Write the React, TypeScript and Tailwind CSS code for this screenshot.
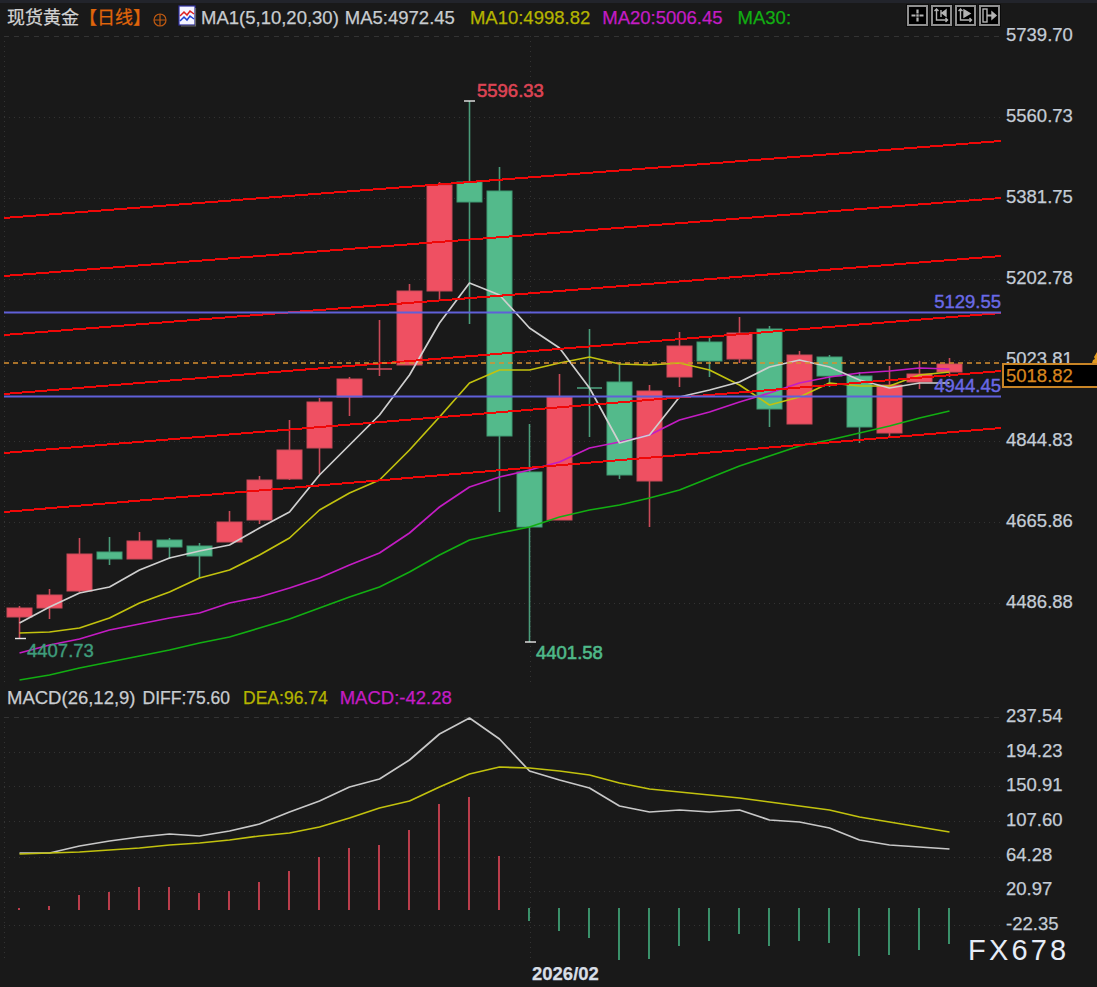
import React from 'react';

// y values are page pixels, one candle every 30px starting at x=19.5
const candles = [
  { t: 608, b: 617, h: 606, l: 639, up: true },
  { t: 595, b: 608, h: 589, l: 619, up: true },
  { t: 554, b: 591, h: 538, l: 592, up: true },
  { t: 552, b: 559, h: 537, l: 565, up: false },
  { t: 541, b: 559, h: 532, l: 559, up: true },
  { t: 540, b: 547, h: 538, l: 559, up: false },
  { t: 546, b: 556, h: 543, l: 578, up: false },
  { t: 522, b: 542, h: 511, l: 542, up: true },
  { t: 480, b: 520, h: 476, l: 524, up: true },
  { t: 450, b: 479, h: 420, l: 480, up: true },
  { t: 402, b: 448, h: 398, l: 474, up: true },
  { t: 379, b: 397, h: 377, l: 416, up: true },
  { t: 369, b: 369, h: 320, l: 376, up: true },
  { t: 291, b: 365, h: 284, l: 365, up: true },
  { t: 185, b: 291, h: 182, l: 300, up: true },
  { t: 182, b: 202, h: 101, l: 324, up: false },
  { t: 191, b: 436, h: 167, l: 512, up: false },
  { t: 472, b: 527, h: 424, l: 642, up: false },
  { t: 397, b: 520, h: 374, l: 520, up: true },
  { t: 388, b: 388, h: 329, l: 437, up: false },
  { t: 382, b: 475, h: 362, l: 479, up: false },
  { t: 391, b: 481, h: 385, l: 527, up: true },
  { t: 346, b: 377, h: 332, l: 387, up: true },
  { t: 342, b: 361, h: 337, l: 377, up: false },
  { t: 333, b: 359, h: 317, l: 363, up: true },
  { t: 329, b: 409, h: 326, l: 427, up: false },
  { t: 355, b: 424, h: 351, l: 424, up: true },
  { t: 357, b: 376, h: 355, l: 387, up: false },
  { t: 376, b: 427, h: 372, l: 443, up: false },
  { t: 385, b: 433, h: 366, l: 437, up: true },
  { t: 374, b: 382, h: 361, l: 389, up: true },
  { t: 364, b: 372, h: 358, l: 377, up: true },
];

const ma5 = [623, 607, 593, 587, 570, 558, 551, 545, 528, 512, 475, 445, 415, 375, 323, 283, 295, 328, 348, 388, 443, 435, 397, 390, 382, 367, 360, 367, 380, 388, 383, 383];
const ma10 = [633, 632, 628, 618, 603, 592, 578, 570, 555, 538, 510, 493, 480, 450, 417, 383, 370, 370, 363, 357, 364, 365, 363, 370, 385, 405, 397, 383, 386, 386, 375, 372];
const ma20 = [653, 645, 639, 630, 624, 618, 613, 603, 597, 588, 578, 565, 553, 533, 507, 487, 477, 470, 462, 448, 442, 435, 420, 412, 402, 393, 383, 377, 373, 371, 368, 369];
const ma30 = [680, 675, 668, 662, 656, 650, 643, 637, 628, 619, 608, 597, 587, 572, 555, 540, 533, 527, 517, 510, 505, 498, 490, 478, 466, 456, 446, 440, 433, 426, 418, 411];

const diff = [853, 853, 846, 841, 837, 834, 836, 831, 824, 812, 801, 787, 779, 760, 734, 718, 739, 771, 780, 788, 806, 812, 810, 812, 810, 820, 822, 828, 840, 845, 847, 849];
const dea = [854, 853, 852, 850, 848, 845, 843, 840, 836, 833, 827, 818, 808, 801, 787, 774, 767, 768, 771, 775, 783, 789, 792, 795, 798, 802, 806, 810, 817, 822, 827, 832];
const macdBars = [908, 906, 895, 892, 887, 887, 893, 891, 882, 871, 857, 848, 845, 830, 804, 797, 856, 921, 931, 938, 960, 959, 946, 941, 934, 946, 941, 943, 956, 955, 950, 944];

const channel = [
  [218, 141],
  [276, 198],
  [335, 256],
  [394, 313],
  [453, 371],
  [512, 428],
];

const priceLabels = ['5739.70', '5560.73', '5381.75', '5202.78', '5023.81', '4844.83', '4665.86', '4486.88'];
const macdLabels = ['237.54', '194.23', '150.91', '107.60', '64.28', '20.97', '-22.35'];

const cx = (i: number) => 19.5 + 30 * i;
const toPoints = (ys: number[]) => ys.map((y, i) => `${cx(i)},${y}`).join(' ');

const MaLine = ({ ys, color }: { ys: number[]; color: string }) => (
  <polyline points={toPoints(ys)} fill="none" stroke={color} strokeWidth={1.7} strokeLinejoin="round" />
);

const GridLines = ({ ys, top, bottom }: { ys: number[]; top: number; bottom: number }) => (
  <g stroke="#333333" strokeWidth={1} shapeRendering="crispEdges">
    {ys.map((y, i) => (
      <line key={y} x1={4} x2={1001} y1={y} y2={y} strokeDasharray={i === 0 ? '5 5' : '1 4'} />
    ))}
    <line x1={4} x2={4} y1={top} y2={bottom} strokeDasharray="1 4" />
    <line x1={530} x2={530} y1={top} y2={bottom} strokeDasharray="1 4" />
  </g>
);

const MainChart = () => (
  <svg className="block" width={1002} height={650} viewBox="0 33 1002 650">
    <GridLines ys={[36, 117, 198, 279, 360, 441, 522, 603]} top={36} bottom={683} />
    {candles.map((c, i) => {
      const x = cx(i);
      const wick = c.up ? '#c84a58' : '#4a9c7a';
      return (
        <g key={i}>
          <line x1={x} x2={x} y1={c.h} y2={c.l} stroke={wick} strokeWidth={1.6} />
          {c.t === c.b ? (
            <line x1={x - 12.5} x2={x + 12.5} y1={c.t} y2={c.t} stroke={wick} strokeWidth={1.6} />
          ) : (
            <rect
              x={x - 12.5}
              y={c.t}
              width={25}
              height={c.b - c.t}
              fill={c.up ? '#ef5062' : '#53ba8b'}
              stroke={c.up ? '#c94a59' : '#3f9a72'}
              strokeWidth={1}
            />
          )}
        </g>
      );
    })}
    <g stroke="#e8e8e8" strokeWidth={1.4}>
      <line x1={464} x2={475} y1={101} y2={101} />
      <line x1={15} x2={26} y1={638.5} y2={638.5} />
      <line x1={525} x2={536} y1={642} y2={642} />
    </g>
    <MaLine ys={ma30} color="#12ae12" />
    <MaLine ys={ma20} color="#c41cc4" />
    <MaLine ys={ma10} color="#c2c20e" />
    <MaLine ys={ma5} color="#cfcfcf" />
    {channel.map(([a, b]) => (
      <line key={a} x1={4} x2={1001} y1={a} y2={b} stroke="#f00808" strokeWidth={2} shapeRendering="crispEdges" />
    ))}
    <line x1={4} x2={1001} y1={312.5} y2={312.5} stroke="#6060d8" strokeWidth={2} />
    <line x1={4} x2={1001} y1={396.5} y2={396.5} stroke="#6060d8" strokeWidth={2} />
    <line x1={4} x2={1001} y1={363} y2={363} stroke="#d89030" strokeWidth={1.5} strokeDasharray="5 4" />
    <g className="text-[18.5px]">
      <text x={477} y={97} className="fill-[#dc4454] stroke-[#dc4454] stroke-[0.6px]">5596.33</text>
      <text x={27} y={657} className="fill-[#3f9d7c] stroke-[#3f9d7c] stroke-[0.4px]">4407.73</text>
      <text x={536} y={659} className="fill-[#4fb98a] stroke-[#4fb98a] stroke-[0.6px]">4401.58</text>
      <text x={1001} y={308} textAnchor="end" className="fill-[#6a6ae6] stroke-[#6a6ae6] stroke-[0.4px]">5129.55</text>
      <text x={1001} y={392} textAnchor="end" className="fill-[#6a6ae6] stroke-[#6a6ae6] stroke-[0.4px]">4944.45</text>
    </g>
  </svg>
);

const MacdChart = () => (
  <svg className="block" width={1002} height={250} viewBox="0 713 1002 250">
    <GridLines ys={[717, 752, 786, 821, 857, 891, 925]} top={717} bottom={960} />
    {macdBars.map((y, i) => {
      const x = cx(i) - 0.5;
      return i < 17 ? (
        <line key={i} x1={x} x2={x} y1={y} y2={910} stroke="#cc4252" strokeWidth={1.8} />
      ) : (
        <line key={i} x1={x} x2={x} y1={908} y2={y} stroke="#3f9f74" strokeWidth={1.8} />
      );
    })}
    <MaLine ys={diff} color="#c8c8c8" />
    <MaLine ys={dea} color="#c2c20e" />
  </svg>
);

const ToolButton = ({ children }: { children: React.ReactNode }) => (
  <div className="w-[21px] h-[21px] bg-black border-2 border-[#8f8f8f] outline-1 outline-[#0c0c0c]">
    <svg width={17} height={17} viewBox="0 0 17 17" fill="none" stroke="#b4b4b4" strokeWidth={1.4}>
      {children}
    </svg>
  </div>
);

const Toolbar = () => (
  <div className="ml-auto mr-[2px] self-start mt-[2px] flex gap-[3px]">
    <ToolButton>
      <path d="M8.500 2.500v4M8.500 10.500v4M2.500 8.500h4M10.500 8.500h4" strokeWidth={2.2} />
      <path d="M8 8h1v1H8z" />
    </ToolButton>
    <ToolButton>
      <path d="M3.500 2v11h11M1.500 4l2-2 2 2M12.500 11l2 2-2 2" />
      <path d="M8 3v7M13 3l-4 3 4 3z" fill="#b4b4b4" />
    </ToolButton>
    <ToolButton>
      <path d="M3.500 2v11h11M1.500 4l2-2 2 2M12.500 11l2 2-2 2" />
      <path d="M7 3v7l6-3.500z" fill="#b4b4b4" />
    </ToolButton>
    <ToolButton>
      <rect x={2} y={2} width={4} height={13} />
      <path d="M6 8.500h6" strokeWidth={2} />
      <path d="M11 5l4 3.500-4 3.500z" fill="#b4b4b4" />
    </ToolButton>
  </div>
);

const Legend = () => (
  <div className="h-[30px] flex items-center whitespace-nowrap text-[18.5px]">
    <span className="ml-[7px] text-[18px] text-[#d2d2d2]">现货黄金</span>
    <span className="text-[18px] text-[#e0660a]">【日线】</span>
    <svg className="ml-[2px] mt-[4px]" width={14} height={14} viewBox="0 0 14 14" fill="none" stroke="#bf5a12" strokeWidth={1.2}>
      <circle cx={7} cy={7} r={6} />
      <path d="M1 7h12M7 1v12" />
    </svg>
    <svg className="ml-[11px] -mt-[4px]" width={19} height={22} viewBox="0 0 19 22" fill="none">
      <rect x={1} y={1} width={16} height={19} fill="#f4f4ff" stroke="#3030a0" strokeWidth={1.2} />
      <path d="M17.500 3v18H3" stroke="#666666" strokeWidth={1.2} />
      <path d="M2 11l4-4 3 3 3-4 4 3" stroke="#e02020" strokeWidth={1.5} />
      <path d="M2 16l4-4 3 3 3-4 4 3" stroke="#2040d0" strokeWidth={1.5} />
    </svg>
    <span className="ml-[4px] text-[#c8ccd0]">MA1(5,10,20,30)</span>
    <span className="ml-[6px] text-[#c8ccd0]">MA5:4972.45</span>
    <span className="ml-[15px] text-[#b4b400]">MA10:4998.82</span>
    <span className="ml-[12px] text-[#c41cc4]">MA20:5006.45</span>
    <span className="ml-[15px] text-[#12ae12]">MA30:</span>
    <Toolbar />
  </div>
);

const MacdLegend = () => (
  <div className="h-[30px] flex items-center whitespace-nowrap text-[18.5px]">
    <span className="ml-[7px] text-[#c8ccd0]">MACD(26,12,9)</span>
    <span className="ml-[7px] text-[17.5px] text-[#c8ccd0]">DIFF:75.60</span>
    <span className="ml-[13px] text-[17.5px] text-[#b4b400]">DEA:96.74</span>
    <span className="ml-[12px] text-[#c41cc4]">MACD:-42.28</span>
  </div>
);

const PriceAxis = () => (
  <div className="relative flex-1 pt-[24px] pl-[4px] text-[18.5px] leading-[22px] text-[#c4ccd6]">
    {priceLabels.map((p) => (
      <div key={p} className="h-[81px]">{p}</div>
    ))}
    <div className="mt-[33px]">
      {macdLabels.map((p) => (
        <div key={p} className="h-[34.67px]">{p}</div>
      ))}
    </div>
    {/* current price tag sits over the axis */}
    <div className="absolute left-0 right-0 top-[363px] h-[25px] bg-black border-2 border-r-0 border-[#c98526] pl-[2px] flex items-center text-[#d8861e]">
      5018.82
    </div>
    <svg className="absolute right-0 top-[352px]" width={5} height={11} viewBox="0 0 5 11">
      <path d="M5 0v11H0l1-3 2-1-1-2z" fill="#e09a20" />
    </svg>
  </div>
);

export default function App() {
  return (
    <div className="relative w-[1097px] h-[987px] overflow-hidden bg-[#191919] font-['Liberation_Sans','Noto_Sans_CJK_SC',sans-serif] [-webkit-text-stroke:0.25px]">
      <div className="h-[3px] bg-[#22242b]" />
      <div className="flex -mt-[3px] h-[987px]">
        <div className="w-[1002px] shrink-0 pt-[3px]">
          <Legend />
          <MainChart />
          <MacdLegend />
          <MacdChart />
          <div className="pl-[532px] text-[18.5px] leading-[22px] font-bold text-[#d8dee6]">2026/02</div>
        </div>
        <PriceAxis />
      </div>
      {/* watermark */}
      <div className="absolute left-[968px] top-[933px] text-[29px] leading-[34px] tracking-[3.2px] text-[#e6ecf6] [-webkit-text-stroke:0px]">FX678</div>
    </div>
  );
}
